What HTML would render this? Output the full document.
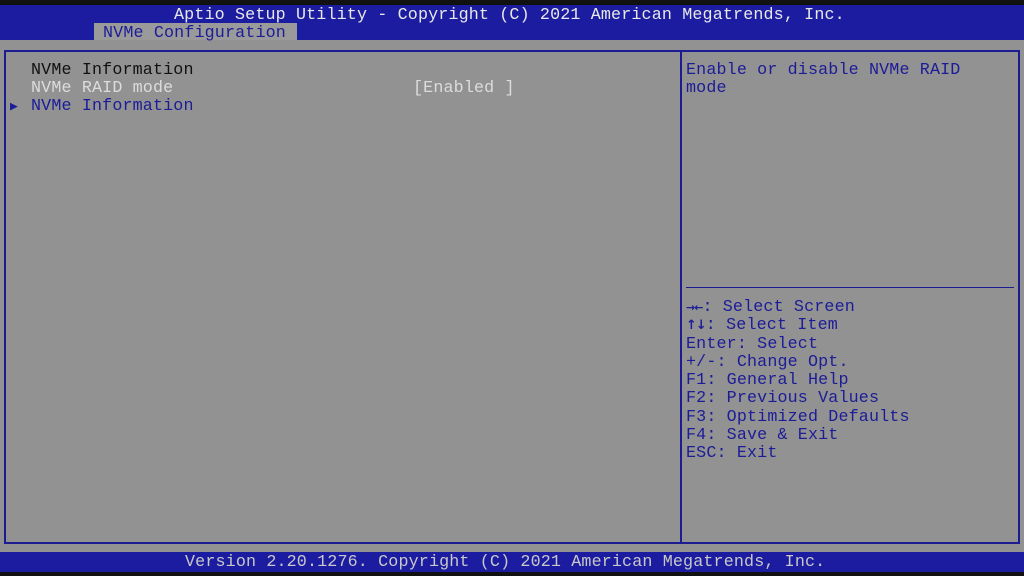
<!DOCTYPE html>
<html><head><style>
html,body{margin:0;padding:0;width:1024px;height:576px;overflow:hidden;background:#111;}
body{position:relative;font-family:"Liberation Mono","DejaVu Sans Mono",monospace;font-size:16.7px;}
.t{position:absolute;white-space:pre;line-height:18px;letter-spacing:0.15px;}
#top{position:absolute;left:0;top:5px;width:1024px;height:35px;background:#1c1ca0;}
#tab{position:absolute;left:94px;top:23px;width:203px;height:17px;background:#9a9a9a;}
#body{position:absolute;left:0;top:40px;width:1024px;height:512px;background:#929292;}
#panel{position:absolute;left:4px;top:50px;width:1012px;height:490px;border:2px solid #1c1c90;}
#div{position:absolute;left:680px;top:50px;width:2px;height:494px;background:#1c1c90;}
#hr{position:absolute;left:686px;top:287px;width:328px;height:1px;background:#1c1c90;}
#bot{position:absolute;left:0;top:552px;width:1024px;height:20px;background:#1c1ca0;}
.w{color:#e8e8e8}.b{color:#1c1c98}.k{color:#111}.l{color:#dcdcdc}
.ar{font-family:"DejaVu Sans",sans-serif;font-weight:bold;font-size:11px;letter-spacing:-1px}
</style></head><body>
<div id="top"></div><div id="tab"></div><div id="body"></div>
<div id="panel"></div><div id="div"></div><div id="hr"></div><div id="bot"></div>
<div class="t w" style="left:174px;top:7px">Aptio Setup Utility - Copyright (C) 2021 American Megatrends, Inc.</div>
<div class="t b" style="left:103px;top:25px">NVMe Configuration</div>
<div class="t k" style="left:31px;top:62px">NVMe Information</div>
<div class="t l" style="left:31px;top:80px">NVMe RAID mode</div>
<div class="t l" style="left:413px;top:80px">[Enabled ]</div>
<div class="t b" style="left:10px;top:98px;font-size:13px">&#9654;</div>
<div class="t b" style="left:31px;top:98px">NVMe Information</div>
<div class="t b" style="left:686px;top:62px">Enable or disable NVMe RAID
mode</div>
<div class="t b" style="left:686px;top:299px;line-height:18.3px"><span class="ar">&#8594;&#8592;</span>: Select Screen
<span class="ar" style="font-size:13px">&#8593;&#8595;</span>: Select Item
Enter: Select
+/-: Change Opt.
F1: General Help
F2: Previous Values
F3: Optimized Defaults
F4: Save &amp; Exit
ESC: Exit</div>
<div class="t" style="left:185px;top:554px;color:#c8c8c8">Version 2.20.1276. Copyright (C) 2021 American Megatrends, Inc.</div>
</body></html>
